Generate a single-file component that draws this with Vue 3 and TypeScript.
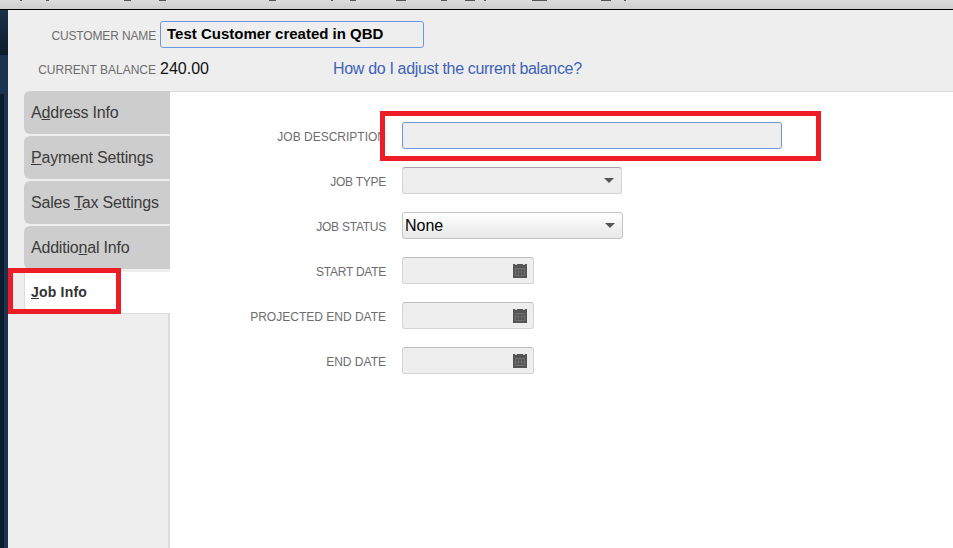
<script setup lang="ts">
interface Tab { before: string; key: string; after: string }
const tabs: Tab[] = [
  { before: 'A', key: 'd', after: 'dress Info' },
  { before: '', key: 'P', after: 'ayment Settings' },
  { before: 'Sales ', key: 'T', after: 'ax Settings' },
  { before: 'Additio', key: 'n', after: 'al Info' },
]
const clipped: [number, number][] = [
  [20, 2], [46, 3], [124, 7], [159, 7], [269, 7], [331, 2], [350, 6], [396, 10],
  [441, 6], [465, 10], [484, 2], [532, 15], [601, 10], [624, 2],
]
</script>

<template>
  <div class="page">
    <div class="topbar">
      <svg width="953" height="2" class="clip">
        <rect v-for="c in clipped" :key="c[0]" :x="c[0]" y="0" :width="c[1]" height="1" fill="#555" />
      </svg>
    </div>
    <div class="shell">
      <div class="rail">
        <div class="rail-top"></div>
        <div class="rail-mid"></div>
        <div class="rail-low"></div>
      </div>
      <div class="main">
        <header class="head">
          <div class="head-row first">
            <span class="head-label tight">CUSTOMER NAME</span>
            <div class="name-box">Test Customer created in QBD</div>
          </div>
          <div class="head-row second">
            <span class="head-label">CURRENT BALANCE</span>
            <span class="balance">240.00</span>
            <a class="help">How do I adjust the current balance?</a>
          </div>
        </header>
        <div class="body">
          <nav class="side">
            <div v-for="t in tabs" :key="t.after" class="tab">{{ t.before }}<u>{{ t.key }}</u>{{ t.after }}</div>
            <div class="tab active"><u>J</u>ob Info</div>
            <div class="side-rest"></div>
          </nav>
          <section class="form">
            <div class="row">
              <label>JOB DESCRIPTION</label>
              <div class="field desc"></div>
            </div>
            <div class="row">
              <label class="tight">JOB TYPE</label>
              <div class="field select disabled"><i class="caret"></i></div>
            </div>
            <div class="row">
              <label class="tight">JOB STATUS</label>
              <div class="field select enabled"><span>None</span><i class="caret"></i></div>
            </div>
            <div class="row" v-for="d in ['START DATE', 'PROJECTED END DATE', 'END DATE']" :key="d">
              <label :class="{ tight: d === 'START DATE' }">{{ d }}</label>
              <div class="field date">
                <svg width="14" height="14" viewBox="0 0 14 14" class="cal">
                  <rect width="14" height="14" fill="#555" />
                  <rect x="2" y="0" width="2" height="1" fill="#ccc" />
                  <rect x="10" y="0" width="2" height="1" fill="#ccc" />
                  <rect x="2.5" y="4.5" width="9" height="7" fill="none" stroke="#8a8a8a" stroke-dasharray="1 1" />
                  <path d="M5.5 4.5v7M8.5 4.5v7M2.5 8h9" stroke="#7a7a7a" stroke-dasharray="1 1" fill="none" />
                </svg>
              </div>
            </div>
          </section>
        </div>
      </div>
    </div>
    <div class="mark mark-desc"></div>
    <div class="mark mark-job"></div>
  </div>
</template>

<style scoped>
.page {
  position: relative;
  width: 953px;
  height: 548px;
  overflow: hidden;
  background: #fff;
  font-family: "Liberation Sans", Arial, sans-serif;
  display: flex;
  flex-direction: column;
}
.topbar {
  height: 9px;
  flex: none;
  background: linear-gradient(#dcdcdc, #cfcfcf);
  border-bottom: 1px solid #000;
  overflow: hidden;
}
.clip { display: block; }
.shell { flex: 1; display: flex; min-height: 0; }
.rail { width: 8px; flex: none; background: #1a3350; display: flex; flex-direction: column; }
.rail-top { height: 45px; flex: none; background: linear-gradient(#1b3049, #0d1b2c); }
.rail-mid { height: 39px; flex: none; }
.rail-low { flex: 1; width: 4px; background: #0d1c2c; }
.main { flex: 1; display: flex; flex-direction: column; min-width: 0; }
.head {
  height: 81px;
  flex: none;
  background: #eee;
  border-bottom: 1px solid #dcdcdc;
  box-sizing: content-box;
}
.head-row { display: flex; align-items: center; }
.head-row.first { padding-top: 11px; height: 27px; }
.head-row.second { margin-top: 10px; height: 22px; }
.head-label {
  width: 148px;
  text-align: right;
  font-size: 12px;
  color: #6d6d6d;
  flex: none;
  padding-top: 2px;
  box-sizing: border-box;
}
.head-label.tight { letter-spacing: -0.15px; }
.name-box {
  margin-left: 4px;
  width: 264px;
  height: 27px;
  box-sizing: border-box;
  border: 1px solid #6b97e0;
  border-radius: 3px;
  background: #eee;
  font-weight: bold;
  font-size: 15px;
  line-height: 23px;
  padding-left: 6px;
  color: #000;
}
.balance { margin-left: 4px; width: 173px; font-size: 16px; color: #111; flex: none; }
.help { font-size: 16px; letter-spacing: -0.33px; color: #3f62b8; }
.body { flex: 1; display: flex; min-height: 0; }
.side {
  width: 162px;
  flex: none;
  background: #eee;
  display: flex;
  flex-direction: column;
  padding-left: 16px;
  box-sizing: border-box;
  margin-top: -1px;
}
.tab {
  height: 43px;
  margin-bottom: 2px;
  background: #cdcdcd;
  border-radius: 6px 0 0 6px;
  padding-left: 7px;
  font-size: 16px;
  letter-spacing: -0.2px;
  line-height: 43px;
  color: #3b3b3b;
  flex: none;
}
.tab.active {
  background: #fff;
  margin: 1px 0 0;
  height: 41px;
  border-radius: 0;
  font-size: 14px;
  letter-spacing: 0.2px;
  font-weight: bold;
  line-height: 40px;
  color: #333;
  border-left: 1px solid #dcdcdc;
  padding-left: 6px;
}
.side-rest { flex: 1; margin-left: -16px; border-top: 1px solid #dcdcdc; border-right: 2px solid #dcdcdc; background: #eee; }
.form { flex: 1; padding-top: 30px; }
.row { display: flex; align-items: center; height: 27px; margin-bottom: 18px; }
.row label {
  width: 216px;
  flex: none;
  text-align: right;
  font-size: 12px;
  color: #6d6d6d;
  white-space: nowrap;
  padding-top: 2px;
}
.row label.tight { letter-spacing: -0.25px; }
.field {
  margin-left: 16px;
  height: 27px;
  box-sizing: border-box;
  border-radius: 3px;
  background: #eee;
  border: 1px solid #d4d4d4;
  position: relative;
  display: flex;
  align-items: center;
}
.desc { width: 380px; border-color: #6b97e0; }
.select { width: 220px; }
.select.disabled { border-top-color: #a6a6a6; }
.select.enabled { width: 221px; background: linear-gradient(#fff, #e8e8e8); border-color: #c4c4c4; font-size: 16px; color: #000; padding-left: 2px; }
.caret {
  position: absolute;
  right: 7px;
  top: 10px;
  width: 0;
  height: 0;
  border-left: 5px solid transparent;
  border-right: 5px solid transparent;
  border-top: 5px solid #555;
}
.date { width: 132px; border-top-color: #bdbdbd; }
.cal { position: absolute; right: 6px; top: 6px; }
.mark { position: absolute; border: 5px solid #ee1c25; box-sizing: border-box; }
.mark-desc { left: 380px; top: 111px; width: 441px; height: 50px; }
.mark-job { left: 8px; top: 268px; width: 113px; height: 46px; }
</style>
